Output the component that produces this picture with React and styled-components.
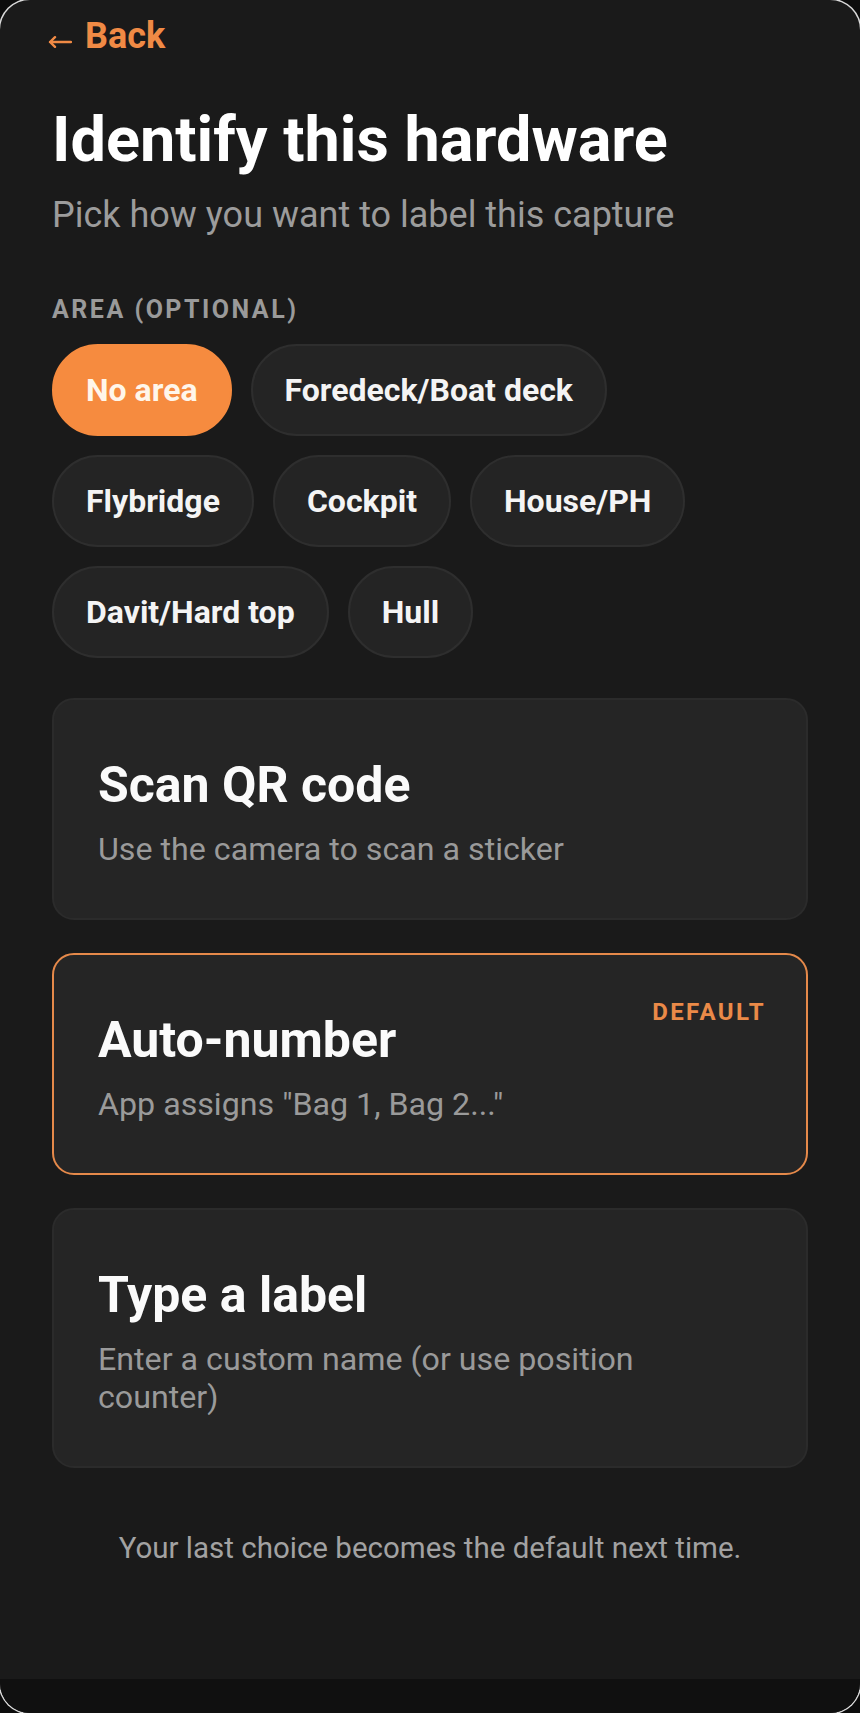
import React, { useState } from "react";
import styled, { createGlobalStyle } from "styled-components";

const GlobalStyle = createGlobalStyle`
  * { box-sizing: border-box; }
  html, body {
    margin: 0;
    padding: 0;
    background: #0c0c0c;
  }
  body {
    font-family: Roboto, "Noto Sans", "Liberation Sans", sans-serif;
    -webkit-font-smoothing: antialiased;
  }
`;

const AREAS = [
  "No area",
  "Foredeck/Boat deck",
  "Flybridge",
  "Cockpit",
  "House/PH",
  "Davit/Hard top",
  "Hull",
];

const OPTIONS = [
  { id: "qr", title: "Scan QR code", hint: "Use the camera to scan a sticker" },
  { id: "auto", title: "Auto-number", hint: 'App assigns "Bag 1, Bag 2..."', isDefault: true },
  { id: "type", title: "Type a label", hint: "Enter a custom name (or use position counter)" },
];

const App = () => {
  const [area, setArea] = useState("No area");

  return (
    <>
      <GlobalStyle />
      <Screen>
        <Content>
          <BackButton type="button">
            <svg width="24" height="12" viewBox="0 0 24 12" fill="none">
              <path
                d="M23 6H2M7 1.2L2 6l5 4.8"
                stroke="currentColor"
                strokeWidth="2.4"
                strokeLinecap="round"
                strokeLinejoin="round"
              />
            </svg>
            Back
          </BackButton>

          <Title>Identify this hardware</Title>
          <Subtitle>Pick how you want to label this capture</Subtitle>

          <SectionLabel>Area (optional)</SectionLabel>
          <ChipWrap>
            {AREAS.map((name) => (
              <Chip
                key={name}
                type="button"
                $active={area === name}
                onClick={() => setArea(name)}
              >
                {name}
              </Chip>
            ))}
          </ChipWrap>

          <Options>
            {OPTIONS.map((opt) => (
              <OptionCard key={opt.id} type="button" $highlight={opt.isDefault}>
                {opt.isDefault && <DefaultBadge>Default</DefaultBadge>}
                <OptionTitle>{opt.title}</OptionTitle>
                <OptionHint>{opt.hint}</OptionHint>
              </OptionCard>
            ))}
          </Options>

          <Footnote>Your last choice becomes the default next time.</Footnote>
        </Content>
        <BottomBar />
      </Screen>
    </>
  );
};

const Screen = styled.div`
  width: 860px;
  height: 1713px;
  background: #1a1a1a;
  border-radius: 30px;
  overflow: hidden;
  box-shadow: 0 0 0 1.5px rgba(255, 255, 255, 0.85);
  display: flex;
  flex-direction: column;
`;

const Content = styled.div`
  flex: 1;
  display: flex;
  flex-direction: column;
  padding: 15px 52px 0;
`;

const BackButton = styled.button`
  align-self: flex-start;
  display: inline-flex;
  align-items: center;
  gap: 13px;
  padding: 0;
  margin: 0 0 0 -4px;
  border: 0;
  background: none;
  color: #f08a45;
  font-family: inherit;
  font-size: 36px;
  font-weight: 700;
  line-height: 42px;
  cursor: pointer;

  svg {
    margin-top: 12px;
    flex-shrink: 0;
  }
`;

const Title = styled.h1`
  margin: 44px 0 0;
  color: #ffffff;
  font-size: 63px;
  font-weight: 700;
  line-height: 77px;
`;

const Subtitle = styled.p`
  margin: 16px 0 0;
  color: #9c9c9c;
  font-size: 36px;
  font-weight: 400;
  line-height: 42px;
`;

const SectionLabel = styled.div`
  margin-top: 59px;
  color: #9a9a9a;
  font-size: 25px;
  font-weight: 700;
  line-height: 29px;
  letter-spacing: 2.5px;
  text-transform: uppercase;
`;

const ChipWrap = styled.div`
  margin-top: 20px;
  display: flex;
  flex-wrap: wrap;
  gap: 19px;
`;

const Chip = styled.button`
  height: 92px;
  padding: 0 32px;
  border-radius: 46px;
  border: 2px solid ${(p) => (p.$active ? "#f68b3f" : "#2e2e2e")};
  background: ${(p) => (p.$active ? "#f68b3f" : "#242424")};
  color: ${(p) => (p.$active ? "#fff6ea" : "#f4f4f4")};
  font-family: inherit;
  font-size: 32px;
  font-weight: 700;
  line-height: 1;
  cursor: pointer;
`;

const Options = styled.div`
  margin-top: 40px;
  display: flex;
  flex-direction: column;
  gap: 33px;
`;

const OptionCard = styled.button`
  position: relative;
  display: flex;
  flex-direction: column;
  align-items: flex-start;
  gap: 16px;
  width: 100%;
  padding: 56px 60px 50px 44px;
  border-radius: 22px;
  border: 2px solid ${(p) => (p.$highlight ? "#e5894a" : "#2b2b2b")};
  background: #252525;
  text-align: left;
  font-family: inherit;
  cursor: pointer;
`;

const OptionTitle = styled.span`
  color: #fafafa;
  font-size: 50px;
  font-weight: 700;
  line-height: 58px;
`;

const OptionHint = styled.span`
  color: #9a9a9a;
  font-size: 32.2px;
  font-weight: 400;
  line-height: 38px;
`;

const DefaultBadge = styled.span`
  position: absolute;
  top: 43px;
  right: 40px;
  color: #ea8a48;
  font-size: 24px;
  font-weight: 700;
  line-height: 28px;
  letter-spacing: 2.4px;
  text-transform: uppercase;
`;

const Footnote = styled.p`
  margin: 63px 0 0;
  color: #a2a2a2;
  font-size: 29.5px;
  font-weight: 400;
  line-height: 35px;
  text-align: center;
`;

const BottomBar = styled.div`
  height: 34px;
  flex-shrink: 0;
  background: #101010;
`;

export default App;
